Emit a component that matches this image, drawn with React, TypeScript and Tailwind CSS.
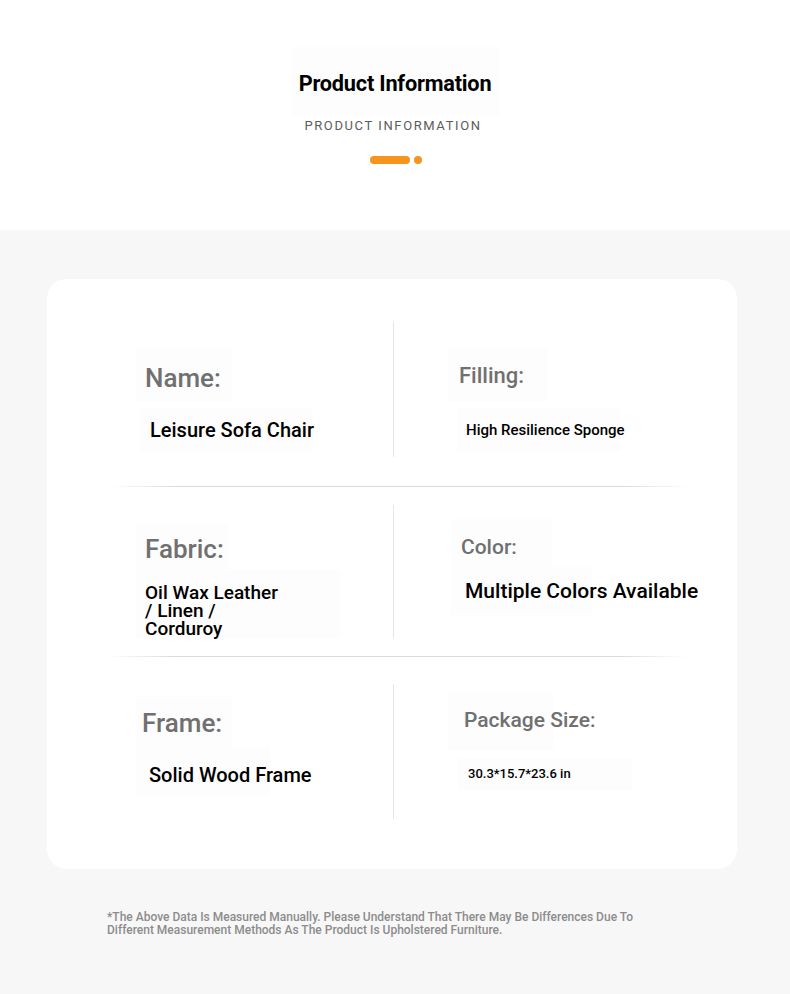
import React from "react";

const font = { fontFamily: "Roboto, 'Noto Sans', sans-serif" };

function HLine({ className }: { className: string }) {
  return (
    <div
      className={`h-px bg-[linear-gradient(90deg,transparent,#dadada_12%,#dadada_88%,transparent)] ${className}`}
    />
  );
}

export default function App() {
  return (
    <div className="w-[790px] min-h-[994px] bg-[#f7f7f7] text-black pb-[40px]" style={font}>
      {/* header */}
      <div className="h-[230px] bg-white flex flex-col items-center">
        <div className="mt-[47px] h-[68px] w-[207px] bg-[#fdfdfd] flex items-center justify-center pt-[7px]">
          <h1 className="text-[21.7px] font-bold tracking-[-0.2px]">Product Information</h1>
        </div>
        <p className="mt-[3px] mr-[4px] text-[13px] leading-4 tracking-[1.6px] text-[#5c5c5c]">
          PRODUCT INFORMATION
        </p>
        <div className="mt-[22px] flex items-center gap-[4px] pl-[2px]">
          <span className="block w-[40px] h-[8px] rounded-full bg-[#f7941d]" />
          <span className="block w-[8px] h-[8px] rounded-full bg-[#f7941d]" />
        </div>
      </div>

      {/* card */}
      <div className="pt-[49px] pl-[47px]">
        <div className="w-[690px] h-[590px] bg-white rounded-[20px] pt-[43px]">
          {/* row 1 */}
          <div className="flex h-[135px]">
            <div className="w-[346px] flex flex-col">
              <div className="ml-[89px] mt-[27px] w-[96px] h-[53px] bg-[#fdfdfd] flex items-center pl-[9px] pt-[5px]">
                <span className="text-[26px] font-medium text-[#707070]">Name:</span>
              </div>
              <div className="ml-[93px] mt-[6px] w-[172px] h-[44px] bg-[#fdfdfd] flex items-center pl-[10px]">
                <span className="text-[20px] font-medium whitespace-nowrap">Leisure Sofa Chair</span>
              </div>
            </div>
            <div className="w-px bg-[#e6e6e6]" />
            <div className="flex-1 flex flex-col">
              <div className="ml-[54px] mt-[26px] w-[99px] h-[54px] bg-[#fdfdfd] flex items-center pl-[11px]">
                <span className="text-[22px] font-medium text-[#707070]">Filling:</span>
              </div>
              <div className="ml-[63px] mt-[6px] w-[163px] h-[44px] bg-[#fdfdfd] flex items-center pl-[9px]">
                <span className="text-[15px] font-medium whitespace-nowrap">High Resilience Sponge</span>
              </div>
            </div>
          </div>

          <HLine className="mt-[29px] ml-[63px] w-[580px]" />

          {/* row 2 */}
          <div className="flex h-[133px] mt-[18px]">
            <div className="w-[346px] flex flex-col">
              <div className="ml-[89px] mt-[18px] w-[92px] h-[49px] bg-[#fdfdfd] flex items-center pl-[9px] pt-[6px]">
                <span className="text-[26px] font-medium text-[#707070]">Fabric:</span>
              </div>
              <div className="ml-[89px] mt-[1px] w-[204px] h-[69px] bg-[#fdfdfd] pl-[9px] pt-[14px]">
                <p className="text-[19px] font-medium leading-[18px] w-[143px]">
                  Oil Wax Leather / Linen / Corduroy
                </p>
              </div>
            </div>
            <div className="w-px bg-[#e6e6e6]" />
            <div className="flex-1 flex flex-col">
              <div className="ml-[57px] mt-[14px] w-[101px] h-[48px] bg-[#fdfdfd] flex items-center pl-[10px] pt-[10px]">
                <span className="text-[21px] font-medium text-[#707070]">Color:</span>
              </div>
              <div className="ml-[57px] w-[141px] h-[48px] bg-[#fdfdfd] flex items-center pl-[14px] pt-[2px]">
                <span className="text-[21px] font-medium whitespace-nowrap">Multiple Colors Available</span>
              </div>
            </div>
          </div>

          <HLine className="mt-[18px] ml-[60px] w-[580px]" />

          {/* row 3 */}
          <div className="flex h-[135px] mt-[27px]">
            <div className="w-[346px] flex flex-col">
              <div className="ml-[89px] mt-[13px] w-[96px] h-[50px] bg-[#fdfdfd] flex items-center pl-[6px] pt-[2px]">
                <span className="text-[26px] font-medium text-[#707070]">Frame:</span>
              </div>
              <div className="ml-[89px] w-[134px] h-[48px] bg-[#fdfdfd] flex items-center pl-[13px] pt-[7px]">
                <span className="text-[20px] font-medium whitespace-nowrap">Solid Wood Frame</span>
              </div>
            </div>
            <div className="w-px bg-[#e6e6e6]" />
            <div className="flex-1 flex flex-col">
              <div className="ml-[54px] mt-[8px] w-[105px] h-[58px] bg-[#fdfdfd] flex items-center pl-[16px]">
                <span className="text-[21px] font-medium text-[#707070] whitespace-nowrap">Package Size:</span>
              </div>
              <div className="ml-[64px] mt-[8px] w-[174px] h-[32px] bg-[#fdfdfd] flex items-center pl-[10px]">
                <span className="text-[13px] font-medium whitespace-nowrap">30.3*15.7*23.6 in</span>
              </div>
            </div>
          </div>
        </div>
      </div>

      {/* note */}
      <p className="mt-[42px] ml-[107px] w-[545px] text-[12px] leading-[13px] font-medium text-[#8c8c8c]">
        *The Above Data Is Measured Manually. Please Understand That There May Be Differences Due To Different Measurement Methods As The Product Is Upholstered Furniture.
      </p>
    </div>
  );
}
